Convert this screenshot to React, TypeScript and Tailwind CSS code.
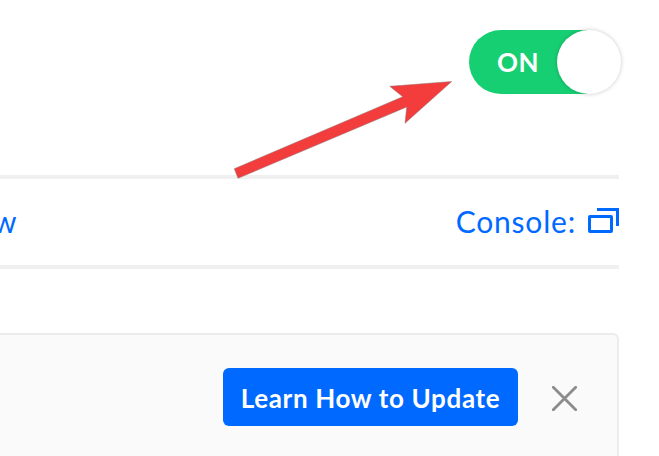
function Toggle() {
  return (
    <button className="flex h-16 w-[152px] items-center justify-between rounded-full bg-[linear-gradient(90deg,#17cf73_0_118px,transparent_118px)] pl-7">
      <span className="text-[26px] leading-8 font-bold tracking-[0.4px] text-white">ON</span>
      <span className="size-16 rounded-full bg-white shadow-[0_0_4px_rgba(0,0,0,0.22)]" />
    </button>
  );
}

function ConsoleIcon() {
  return (
    <svg className="h-[26px] w-[31px]" viewBox="0 0 31 26" fill="none" stroke="#0069ff" strokeWidth="3">
      <rect x="1.5" y="8.5" width="22" height="15" rx="0.5" />
      <path d="M9 1.5H29.5V18" />
    </svg>
  );
}

function Arrow() {
  return (
    <svg className="pointer-events-none absolute inset-0" width="659" height="456" viewBox="0 0 659 456">
      <path
        d="M234.3 168.7L402.7 96.7L389.7 86.3L451.7 81.5L405 123.3L406.7 107L238 178.3Z"
        fill="#f33c3c"
        stroke="#8f7777"
        strokeWidth="0.5"
      />
    </svg>
  );
}

export default function App() {
  return (
    <div className="relative h-[456px] w-[659px] overflow-hidden bg-white font-['Lato','Open_Sans',sans-serif]">
      <header className="flex h-[175px] justify-end pt-[30px] pr-[38px]">
        <Toggle />
      </header>
      <nav className="mr-10 flex h-[94px] items-center justify-between border-y-4 border-[#f0f0f0] pb-[2px] text-[30px] leading-9 text-[#0069ff]">
        <a className="-ml-[7px]">w</a>
        <a className="flex items-center gap-3">
          <span className="tracking-[0.8px]">Console:</span>
          <ConsoleIcon />
        </a>
      </nav>
      <section className="mt-16 mr-10 flex h-40 items-start justify-end rounded-tr-md border-t-2 border-r-2 border-[#ececec] bg-[#fafafa] pt-[33px] pr-10">
        <button className="flex h-[58px] w-[295px] items-center justify-center rounded-md bg-[#0069ff] pt-[2px] text-[26px] leading-8 font-bold tracking-[0.65px] whitespace-nowrap text-white">
          Learn How to Update
        </button>
        <button className="mt-[18px] ml-[34px]" aria-label="Close">
          <svg className="size-[25px]" viewBox="0 0 25 25" stroke="#8c8c8c" strokeWidth="2.8" strokeLinecap="round">
            <path d="M1.3 1.3L23.7 23.7M23.7 1.3L1.3 23.7" />
          </svg>
        </button>
      </section>
      <Arrow />
    </div>
  );
}
